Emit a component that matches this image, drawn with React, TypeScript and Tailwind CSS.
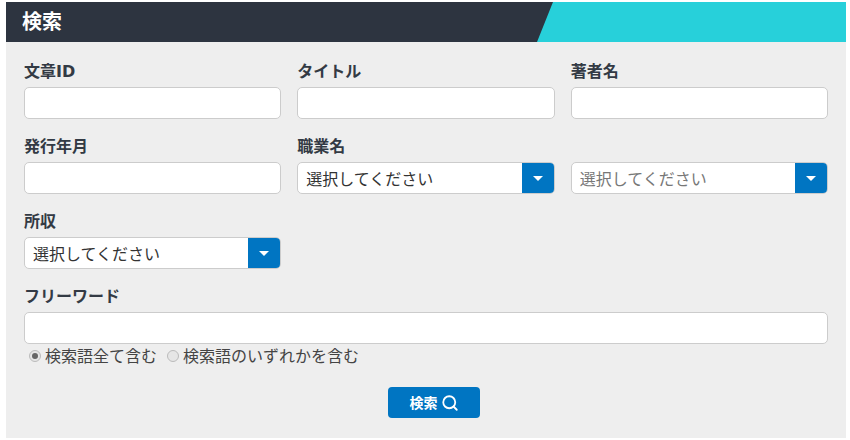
import React from 'react';
import { Search } from 'lucide-react';

const font = "font-['Open_Sans','Noto_Sans_CJK_JP',sans-serif]";

const Field: React.FC<{ label?: string; className?: string; children: React.ReactNode }> = ({ label, className, children }) => (
  <div className={`flex flex-col ${className ?? ''}`}>
    <label className="h-[25px] font-['DejaVu_Sans','Noto_Sans_CJK_JP',sans-serif] text-[16px] leading-[20px] font-bold text-[#333a44]">{label ?? '\u00a0'}</label>
    {children}
  </div>
);

const TextBox = () => (
  <input type="text" className="h-[32px] w-full rounded-[5px] border border-[#ccc] bg-white" />
);

const SelectBox: React.FC<{ muted?: boolean }> = ({ muted }) => (
  <div className="flex h-[32px] w-full overflow-hidden rounded-[5px] border border-[#ccc] bg-white">
    <span className={`flex-1 pl-[8px] text-[16px] leading-[32px] ${muted ? 'text-[#777]' : 'text-[#333]'}`}>選択してください</span>
    <span className="flex w-[32px] items-center justify-center bg-[#0075c2]">
      <span className="h-0 w-0 border-x-[5px] border-t-[5px] border-x-transparent border-t-white" />
    </span>
  </div>
);

const Radio: React.FC<{ checked?: boolean; label: string }> = ({ checked, label }) => (
  <span className="flex items-center gap-[4px]">
    <span className="flex h-[12px] w-[12px] items-center justify-center rounded-full border border-[#bbb] bg-[#e6e6e6]">
      {checked && <span className="h-[6px] w-[6px] rounded-full bg-[#666]" />}
    </span>
    <span>{label}</span>
  </span>
);

export default function App() {
  return (
    <div className={`${font} h-[440px] w-[850px] bg-white pt-[2px] pl-[6px]`}>
      <div className="w-[840px]">
        {/* Title bar */}
        <div className="flex h-[40px] bg-[#27d0da]">
          <div className="flex w-[547px] items-center bg-[#2d3440] pl-[16px] text-[20px] font-bold text-white [clip-path:polygon(0_0,100%_0,531px_100%,0_100%)]">
            検索
          </div>
        </div>

        {/* Form */}
        <div className="h-[396px] bg-[#eeeeee] px-[18px] pt-[20px]">
          <div className="grid grid-cols-3 gap-x-[16px] gap-y-[18px]">
            <Field label="文章ID"><TextBox /></Field>
            <Field label="タイトル"><TextBox /></Field>
            <Field label="著者名"><TextBox /></Field>
            <Field label="発行年月"><TextBox /></Field>
            <Field label="職業名"><SelectBox /></Field>
            <Field><SelectBox muted /></Field>
            <Field label="所収"><SelectBox /></Field>
            <Field label="フリーワード" className="col-span-3 col-start-1"><TextBox /></Field>
          </div>

          <div className="mt-[2px] flex h-[20px] items-center gap-[10px] pl-[5px] text-[16px] text-[#444]">
            <Radio checked label="検索語全て含む" />
            <Radio label="検索語のいずれかを含む" />
          </div>

          <div className="mt-[21px] flex justify-center pl-[16px]">
            <button className="flex h-[31px] w-[92px] items-center justify-center gap-[3px] rounded-[4px] bg-[#0075c2] text-[14px] font-bold text-white">
              検索
              <Search size={18} strokeWidth={2.4} />
            </button>
          </div>
        </div>
      </div>
    </div>
  );
}
